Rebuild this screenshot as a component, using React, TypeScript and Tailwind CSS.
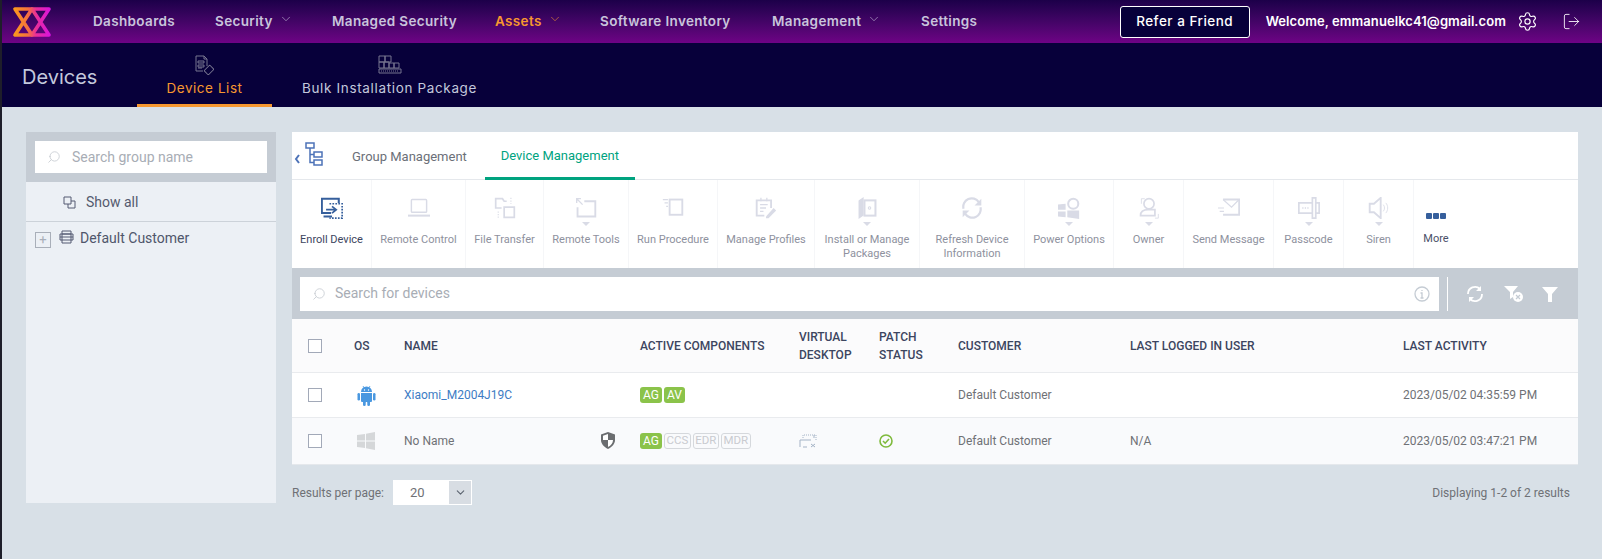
import React from "react";
import { ChevronDown, LogOut, Search, Settings } from "lucide-react";

const head = { fontFamily: '"Inter", "Noto Sans", sans-serif' };
const body = { fontFamily: 'Roboto, "Noto Sans", sans-serif' };

const nav = [
  { label: "Dashboards", w: "w-[122px]" },
  { label: "Security", w: "w-[117px]", chevron: true },
  { label: "Managed Security", w: "w-[163px]" },
  { label: "Assets", w: "w-[105px]", chevron: true, active: true },
  { label: "Software Inventory", w: "w-[172px]" },
  { label: "Management", w: "w-[149px]", chevron: true },
  { label: "Settings", w: "w-[80px]" },
];

const Logo = () => (
  <svg width="40" height="34" viewBox="0 0 40 34" className="ml-[10px] shrink-0">
    <defs>
      <linearGradient id="lg1" gradientUnits="userSpaceOnUse" x1="0" x2="40" y1="0" y2="0">
        <stop offset="0" stopColor="#fb9f17" />
        <stop offset="0.4" stopColor="#f4703f" />
        <stop offset="0.6" stopColor="#ea2f98" />
        <stop offset="1" stopColor="#d60fe8" />
      </linearGradient>
    </defs>
    <path d="M3 4H20L3 30H20Z" fill="none" stroke="url(#lg1)" strokeWidth="3.600" strokeLinejoin="round" />
    <path d="M20 4H37L20 30H37Z" fill="none" stroke="url(#lg1)" strokeWidth="3.600" strokeLinejoin="round" />
  </svg>
);

const Ico = ({ children }: any) => (
  <svg width="22" height="22" viewBox="0 0 26 26" fill="none" stroke="currentColor" strokeWidth="2">
    {children}
  </svg>
);

const tools: any[] = [
  { label: "Enroll Device", w: "w-[80px]", on: true, icon: <Ico><path d="M21 7V2H1v17h11M3 23h10" strokeWidth="2.400" /><path d="M6 15h11m-4-4 5 4-5 4" strokeWidth="2" /><path d="M10 8h15v17H10" strokeDasharray="2 1.5" strokeWidth="2" /></Ico> },
  { label: "Remote Control", w: "w-[94px]", icon: <Ico><rect x="4" y="3" width="18" height="15" rx="1" strokeWidth="1.700" /><path d="M0 22h26" strokeWidth="2.400" /></Ico> },
  { label: "File Transfer", w: "w-[78px]", icon: <Ico><path d="M9 13H2V2h8l2 3h3" /><path d="M12 12h12v12H12z" /><path d="M20 1v7M5 17v8" strokeDasharray="1.500 1.500" strokeWidth="1.300" /></Ico> },
  { label: "Remote Tools", w: "w-[85px]", arrow: true, icon: <Ico><path d="M11 5h13v18H3V12" strokeWidth="2.200" /><path d="M2 2l7 7M2 7V2h5" strokeWidth="1.600" /></Ico> },
  { label: "Run Procedure", w: "w-[89px]", icon: <Ico><rect x="9" y="3" width="15" height="18" strokeWidth="2.200" /><path d="M1 3h6M3 7h4M5 11h2" strokeWidth="1.400" /></Ico> },
  { label: "Manage Profiles", w: "w-[97px]", icon: <Ico><path d="M19 13V4H2v18h9" strokeWidth="2.200" /><path d="M6 9h9M6 13h7M6 17h4M7 1v4M14 1v4" strokeWidth="1.500" /><path d="M13 23l9-10 3 3-9 9h-3z" fill="currentColor" stroke="none" /></Ico> },
  { label: "Install or Manage Packages", w: "w-[105px]", arrow: true, icon: <Ico><path d="M9 0 3 4v22l6-4z" fill="currentColor" stroke="none" /><rect x="10" y="4" width="13" height="18" strokeWidth="2.400" /><circle cx="16" cy="13" r="1.500" strokeWidth="1.200" /></Ico> },
  { label: "Refresh Device Information", w: "w-[105px]", icon: <Ico><path d="M3 14A10 10 0 0 1 21 6M23 12A10 10 0 0 1 5 20" strokeWidth="2.600" /><path d="M24 2v8h-8M2 24v-8h8" fill="currentColor" stroke="none" /></Ico> },
  { label: "Power Options", w: "w-[89px]", arrow: true, icon: <Ico><path d="M0 9l9-1v7H0zM0 17h9v7l-9-1zM11 16h14v10l-14-2z" fill="currentColor" stroke="none" /><circle cx="18" cy="8" r="6" strokeWidth="2.400" /></Ico> },
  { label: "Owner", w: "w-[70px]", arrow: true, icon: <Ico><circle cx="13" cy="8" r="6" strokeWidth="2" /><path d="M3 22c0-4 3-7 9-7h8v7z" strokeWidth="2" /><path d="M4 8V2h4M24 20v5h-4" strokeWidth="1" /></Ico> },
  { label: "Send Message", w: "w-[90px]", icon: <Ico><path d="M6 3h19v18H6" strokeWidth="2.200" /><path d="m6 3 10 9 9-9M0 13h7M2 17h5" strokeWidth="1.400" /></Ico> },
  { label: "Passcode", w: "w-[70px]", arrow: true, icon: <Ico><path d="M17 7H1v12h16M17 1h4v24h-4zM21 7h4v12h-4" strokeWidth="2" /><path d="M5 13h8" strokeDasharray="1.500 1.500" strokeWidth="1.800" /></Ico> },
  { label: "Siren", w: "w-[70px]", arrow: true, icon: <Ico><path d="M2 8h5l8-7v24l-8-7H2z" strokeWidth="2.200" /><path d="M18 9c2 2 2 6 0 8M21 7c3 3 3 9 0 12" strokeWidth="1" /></Ico> },
];

const grid = "grid grid-cols-[62px_50px_236px_159px_80px_79px_172px_273px_175px] items-center text-[12px]";

const Check = () => <span className="block h-[14px] w-[14px] border border-[#a2a9b8] bg-white" />;

const Badge = ({ t, on }: { t: string; on?: boolean }) => (
  <span className={on ? "flex h-[16px] items-center rounded-[3px] bg-[#8bc34a] px-[3px] text-[12px] text-white" : "flex h-[16px] items-center rounded-[3px] border border-[#d5d8dc] px-[1.5px] text-[11.5px] text-[#c9cbd0]"}>{t}</span>
);

const Android = () => (
  <svg width="19" height="21" viewBox="0 0 19 21" fill="#4a98e0">
    <path d="M4 7a5.500 5.500 0 0 1 11 0z" />
    <path d="M6 1l1.500 2.500M13 1l-1.500 2.500" stroke="#4a98e0" strokeWidth="0.800" />
    <path d="M4 8h11v8a1 1 0 0 1-1 1H5a1 1 0 0 1-1-1z" />
    <rect x="0.500" y="8" width="2.500" height="7.500" rx="1.250" />
    <rect x="16" y="8" width="2.500" height="7.500" rx="1.250" />
    <rect x="6" y="16" width="2.700" height="5" rx="1.350" />
    <rect x="10.300" y="16" width="2.700" height="5" rx="1.350" />
    <circle cx="7.500" cy="5" r="0.700" fill="white" />
    <circle cx="11.500" cy="5" r="0.700" fill="white" />
  </svg>
);

const Windows = () => (
  <svg width="18" height="18" viewBox="0 0 18 18" fill="#d5d7d9">
    <path d="M0 3 8 2v6.500H0zM9 1.800 18 0v8.500H9zM0 9.500h8V16l-8-1zM9 9.500h9V18l-9-1.700z" />
  </svg>
);

export default function App() {
  return (
    <div className="flex h-[559px] w-[1602px] flex-col overflow-hidden border-l-2 border-[#1e1e2a] bg-[#d8e0e7]" style={body}>
      <header className="flex h-[43px] shrink-0 items-center bg-gradient-to-b from-[#1c0049] to-[#6e0285]" style={head}>
        <Logo />
        <nav className="ml-[41px] flex">
          {nav.map((n) => (
            <div key={n.label} className={`${n.w} flex items-center gap-[6px] text-[13.5px] font-semibold tracking-[0.35px] ${n.active ? "text-[#f7982f]" : "text-[#c9c4dc]"}`}>
              {n.label}
              {n.chevron && <ChevronDown size={14} strokeWidth={1} className="mb-[5px]" />}
            </div>
          ))}
        </nav>
        <div className="ml-auto flex items-center text-white">
          <button className="flex h-[32px] w-[130px] items-center justify-center rounded-[3px] border border-white bg-[#07003a] text-[13.5px] font-medium tracking-[0.5px]">Refer a Friend</button>
          <span className="ml-[16px] text-[13px] font-semibold tracking-[0.07px]">Welcome, emmanuelkc41@gmail.com</span>
          <Settings size={21} strokeWidth={1.3} className="ml-[11px]" />
          <LogOut size={19} strokeWidth={1.1} className="ml-[24px] mr-[21px]" />
        </div>
      </header>

      <div className="flex h-[64px] shrink-0 bg-[#07003a] text-[#c3c8dc]" style={head}>
        <div className="w-[135px] pl-[20px] pt-[19px] text-[20px]">Devices</div>
        <div className="flex h-full w-[135px] flex-col items-center border-b-[3px] border-[#f7982f] pt-[12px] text-[#f7982f]">
          <svg width="19" height="20" viewBox="0 0 19 20" fill="none" stroke="#77748f" strokeWidth="1"><path d="M12 11V4L9 1H1v15h7M9 1v3h3" /><path d="M3 6h6v2H3zM3 10h6v2H3zM3 13h4" /><rect x="11" y="11" width="6" height="8" rx="1" transform="rotate(45 14 15)" /></svg>
          <span className="mt-[3px] text-[13.5px] tracking-[0.55px]">Device List</span>
        </div>
        <div className="ml-[30px] flex flex-col items-center pt-[12px]">
          <svg width="24" height="20" viewBox="0 0 24 20" fill="none" stroke="#77748f" strokeWidth="1"><path d="M1 1h6v6H1zM7 1h6v6H7zM1 7h5v6H1zM6 7h5v6H6zM11 8h5v5h-5zM16 8h5v5h-5zM1 14h22v4H1z" /><path d="M3 16h18" strokeDasharray="1 1" /></svg>
          <span className="mt-[3px] text-[13.5px] tracking-[0.65px]">Bulk Installation Package</span>
        </div>
      </div>

      <div className="flex gap-[16px] px-[24px] pt-[25px]">
        <aside className="h-[371px] w-[250px] shrink-0 bg-[#ecf0f5]">
          <div className="bg-[#c5ccd4] p-[9px]">
            <div className="flex h-[32px] items-center gap-[11px] bg-white px-[12px] text-[14px] text-[#a8adb5]">
              <Search size={14} strokeWidth={1.4} className="-scale-x-100 text-[#c5cad0]" />
              Search group name
            </div>
          </div>
          <div className="flex h-[40px] items-center gap-[10px] border-b border-[#ccd2d9] pl-[37px] pt-[2px] text-[14px] text-[#545a6e]">
            <svg width="13" height="13" viewBox="0 0 13 13" fill="none" stroke="#555b72"><path d="M1 1h7v7H1zM5 8v4h7V5H8" /></svg>
            Show all
          </div>
          <div className="flex h-[33px] items-center pl-[9px] text-[14px] text-[#4f566b]">
            <span className="mt-[2px] flex h-[16px] w-[16px] items-center justify-center border border-[#a9afb9] text-[13px] leading-none text-[#a9afb9]">+</span>
            <svg width="15" height="14" viewBox="0 0 15 14" fill="none" stroke="#555b72" className="mb-[4px] ml-[8px]"><path d="M3 1h9v12H3zM1 4h13v6H1zM1 7h13M3 4h9" /></svg>
            <span className="ml-[6px]">Default Customer</span>
          </div>
        </aside>

        <main className="w-[1286px]">
          <div className="flex h-[48px] border-b border-[#e5e8ec] bg-white text-[13px]">
            <svg width="34" height="28" viewBox="0 0 34 28" fill="none" stroke="#4d73b8" strokeWidth="1.500" className="ml-[2px] mt-[10px]">
              <path d="m5 13-3 4 3 4" strokeWidth="2" />
              <path d="M12 1h8v5h-8zM20 10h8v5h-8zM20 18h8v5h-8zM16 6v14.500h4M16 12.500h4" />
            </svg>
            <div className="ml-[24px] flex h-full items-center pt-[2px] text-[#6b6f78]">Group Management</div>
            <div className="ml-[18px] flex h-[48px] w-[150px] items-center justify-center border-b-[3px] border-[#00a37f] pt-[2px] text-[#00a37f]">Device Management</div>
          </div>

          <div className="flex h-[88px] bg-white">
            {tools.map((t) => (
              <div key={t.label} className={`${t.w} relative flex shrink-0 flex-col items-center border-r border-[#f5f6f8] pt-[17px] ${t.on ? "text-[#365f9c]" : "text-[#d9dbe6]"}`}>
                <div className="h-[22px]">{t.icon}</div>
                {t.arrow && <span className="mt-[3px] h-0 w-0 border-x-[4px] border-t-[4px] border-x-transparent border-t-[#d9dbe6]" />}
                <span className={`absolute top-[53px] w-full px-1 text-center text-[11px] leading-[14px] ${t.on ? "text-[#3c4560]" : "text-[#8e919e]"}`}>{t.label}</span>
              </div>
            ))}
            <div className="flex w-[44px] flex-col items-center pt-[33px] text-[11px] text-[#4a5068]">
              <div className="flex gap-[1px]">
                <i className="h-[6px] w-[6px] rounded-[1px] bg-[#365f9c]" />
                <i className="h-[6px] w-[6px] rounded-[1px] bg-[#365f9c]" />
                <i className="h-[6px] w-[6px] rounded-[1px] bg-[#365f9c]" />
              </div>
              <span className="mt-[13px] leading-[14px]">More</span>
            </div>
          </div>

          <div className="flex h-[51px] items-center bg-[#c5ccd4] pl-[8px]">
            <div className="flex h-[34px] w-[1139px] items-center gap-[9px] bg-white px-[12px] text-[14px] text-[#a8adb5]">
              <Search size={14} strokeWidth={1.4} className="-scale-x-100 text-[#c5cad0]" />
              Search for devices
              <svg width="16" height="16" viewBox="0 0 16 16" fill="none" stroke="#c5ccd4" strokeWidth="1.300" className="ml-auto mr-[-3px]"><circle cx="8" cy="8" r="7" /><path d="M6.500 7H8v5M6.500 12h3M8 4v1" /></svg>
            </div>
            <span className="ml-[8px] h-[34px] w-px bg-white" />
            <svg width="18" height="18" viewBox="0 0 18 18" fill="none" stroke="white" strokeWidth="1.800" className="ml-[18px]"><path d="M2 9a7 7 0 0 1 12-5M16 9a7 7 0 0 1-12 5" /><path d="M15 1v5h-5M3 17v-5h5" fill="white" stroke="none" /></svg>
            <svg width="20" height="18" viewBox="0 0 20 18" className="ml-[20px]" fill="white"><path d="M0 1h14L9 7v5L6 14V7z" /><circle cx="14" cy="12" r="5" /><path d="m12 10 4 4m0-4-4 4" stroke="#c5ccd4" strokeWidth="1.200" /></svg>
            <svg width="16" height="16" viewBox="0 0 16 16" className="ml-[18px]" fill="white"><path d="M0 1h16L10 8v8H6V8z" /></svg>
          </div>

          <div className={`${grid} h-[54px] border-b border-[#e9ebee] bg-[#fbfbfc] font-medium leading-[18px] text-[#3c4560]`}>
            <div className="pl-[16px]"><Check /></div>
            <div>OS</div>
            <div>NAME</div>
            <div>ACTIVE COMPONENTS</div>
            <div>VIRTUAL<br />DESKTOP</div>
            <div>PATCH<br />STATUS</div>
            <div>CUSTOMER</div>
            <div>LAST LOGGED IN USER</div>
            <div>LAST ACTIVITY</div>
          </div>

          <div className={`${grid} h-[45px] border-b border-[#e9ebee] bg-white text-[#6f7176]`}>
            <div className="pl-[16px]"><Check /></div>
            <div className="pl-[3px]"><Android /></div>
            <div className="text-[#3d7cc4]">Xiaomi_M2004J19C</div>
            <div className="flex gap-[2px]"><Badge t="AG" on /><Badge t="AV" on /></div>
            <div />
            <div />
            <div>Default Customer</div>
            <div />
            <div>2023/05/02 04:35:59 PM</div>
          </div>

          <div className={`${grid} h-[47px] border-b border-[#e5e8ec] bg-[#f9fafc] text-[#6f7176]`}>
            <div className="pl-[16px]"><Check /></div>
            <div className="pl-[3px]"><Windows /></div>
            <div>No Name</div>
            <div className="relative flex gap-[2px]">
              <svg width="16" height="17" viewBox="0 0 16 17" className="absolute left-[-40px] top-[-1px]">
                <path d="M8 0 15 2.500V8c0 4-3 7-7 9-4-2-7-5-7-9V2.500z" fill="#6b6d70" />
                <path d="M8 2 3 3.800V8h5zM8 8v7c3-1.500 5-4 5-7z" fill="white" />
              </svg>
              <Badge t="AG" on /><Badge t="CCS" /><Badge t="EDR" /><Badge t="MDR" />
            </div>
            <div>
              <svg width="18" height="14" viewBox="0 0 18 14" fill="none" stroke="#a4b3c6"><path d="M1 6h11M1 6v7M15 1v3M12 10l4 3m0-3-4 3M4 13h4" /><path d="M4 4V1h13v5" strokeDasharray="1 1" /></svg>
            </div>
            <div>
              <svg width="14" height="14" viewBox="0 0 14 14" fill="none" stroke="#7fba3c"><circle cx="7" cy="7" r="6" strokeWidth="1.600" /><path d="m4 7 2.200 2.200L10 5" strokeWidth="1.600" /></svg>
            </div>
            <div>Default Customer</div>
            <div>N/A</div>
            <div>2023/05/02 03:47:21 PM</div>
          </div>

          <div className="mt-[15px] flex items-center text-[12px] text-[#6f7176]">
            <span>Results per page:</span>
            <div className="ml-[9px] flex h-[25px] w-[79px] items-center border border-white bg-white">
              <span className="w-[55px] pl-[16px] text-[13px]">20</span>
              <span className="flex h-full flex-1 items-center justify-center bg-[#d8dde3]"><ChevronDown size={13} className="text-[#5c6470]" /></span>
            </div>
            <span className="ml-auto pr-[8px]">Displaying 1-2 of 2 results</span>
          </div>
        </main>
      </div>
    </div>
  );
}
